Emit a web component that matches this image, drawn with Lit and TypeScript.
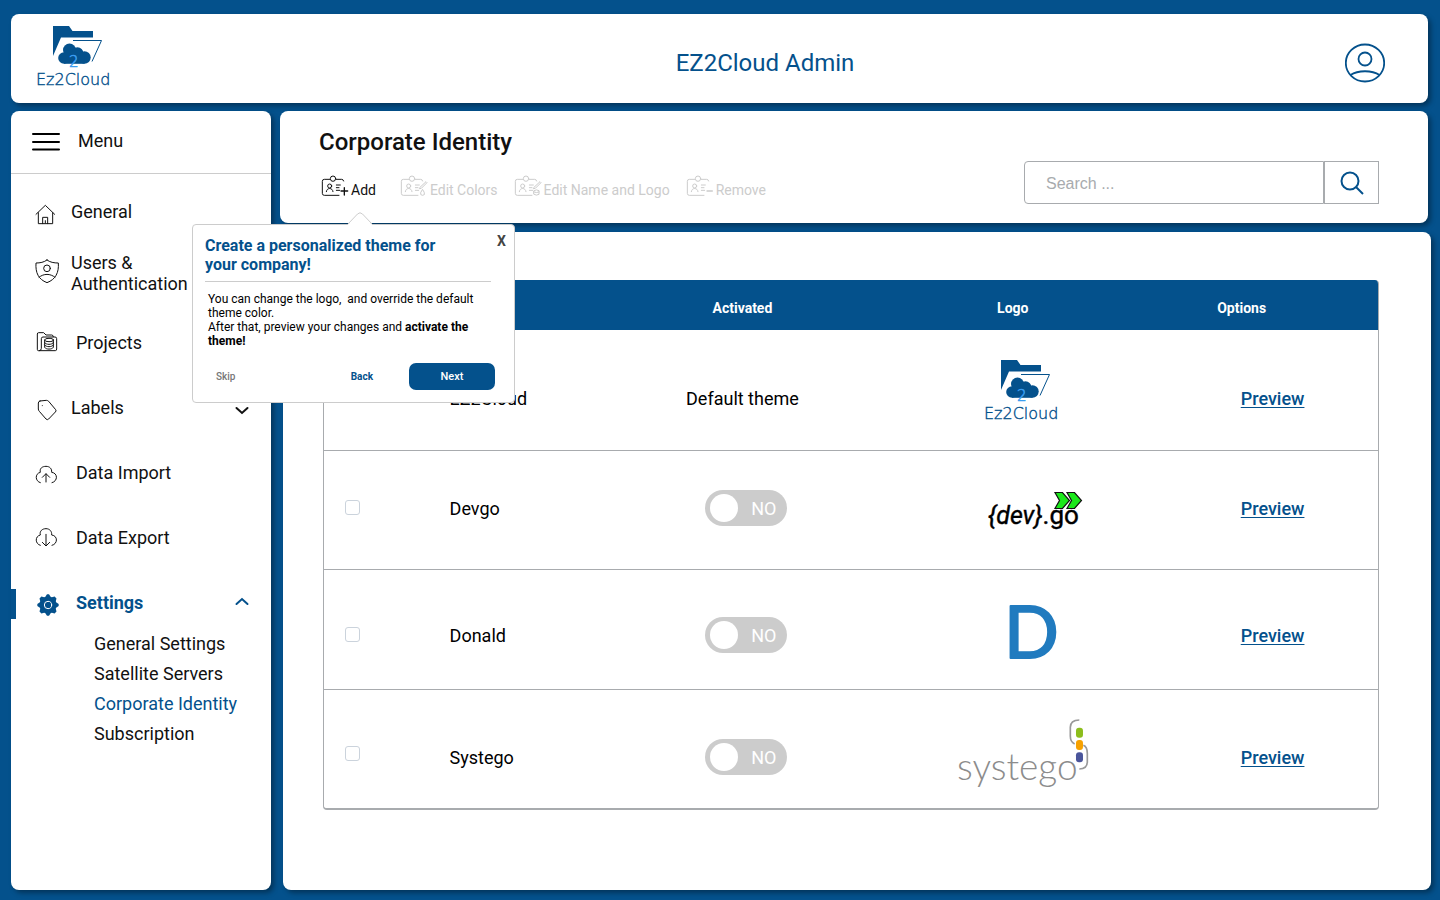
import { LitElement, html, css, svg, nothing } from "lit";
import { customElement } from "lit/decorators.js";
import { classMap } from "lit/directives/class-map.js";

interface NavItem {
  label: string;
  icon: string;
  wide?: boolean;
  arrow?: "down" | "up";
  active?: boolean;
}

interface Theme {
  name: string;
  logo: string;
  place: string;
  isDefault?: boolean;
}

const topItems: NavItem[] = [
  { label: "General", icon: "home" },
  { label: "Users & Authentication", icon: "shield" },
];

const mainItems: NavItem[] = [
  { label: "Projects", icon: "projects", wide: true },
  { label: "Labels", icon: "tag", arrow: "down" },
  { label: "Data Import", icon: "import", wide: true },
  { label: "Data Export", icon: "export", wide: true },
  { label: "Settings", icon: "gear", wide: true, arrow: "up", active: true },
];

const subItems = ["General Settings", "Satellite Servers", "Corporate Identity", "Subscription"];

const themes: Theme[] = [
  { name: "EZ2Cloud", logo: "ez", place: "low", isDefault: true },
  { name: "Devgo", logo: "devgo", place: "high" },
  { name: "Donald", logo: "donald", place: "mid" },
  { name: "Systego", logo: "systego", place: "low" },
];

/* The folder, cloud and wordmark, drawn in a 76 x 60 area. */
const ezMark = svg`
  <path fill="#04518c" d="M16 0H32L35.500 5H56V11.500H24L16 30z" />
  <path fill="none" stroke="#04518c" stroke-width="1" d="M36 14.500H64.500L55 35.500" />
  <g fill="#04518c">
    <circle cx="27" cy="32" r="5.800" />
    <circle cx="32.500" cy="24" r="6.500" />
    <circle cx="40.500" cy="27" r="5.800" />
    <circle cx="47.500" cy="31.500" r="6.200" />
    <rect x="27" y="26" width="20.500" height="11.800" />
  </g>
  <text class="word" x="32" y="41" font-size="15" fill="#3b9df0" stroke="#3b9df0" stroke-width="0.600">2</text>
  <text class="word" x="-1" y="59" font-size="16" fill="#04518c" stroke="#04518c" stroke-width="0.400">Ez2Cloud</text>`;

@customElement("app-root")
export class AppRoot extends LitElement {
  static styles = css`
    :host {
      --brand: #04518c;
      --line: #a8abae;
      display: flex;
      flex-direction: column;
      gap: 8px;
      box-sizing: border-box;
      min-height: 100vh;
      padding: 14px 12px 10px 11px;
      background: var(--brand);
      color: #111;
      font-family: Roboto, "Liberation Sans", sans-serif;
      font-size: 18px;
      line-height: 21px;
    }
    *, *::before { box-sizing: border-box; }
    button, input { font: inherit; color: inherit; }
    button { padding: 0; border: 0; background: none; cursor: pointer; }
    a { color: inherit; text-decoration: none; }
    ul { list-style: none; margin: 0; padding: 0; }
    svg { display: block; flex: none; }
    .word { font-family: "DejaVu Sans", sans-serif; font-weight: 200; }
    .card {
      background: #fff;
      border-radius: 8px;
      box-shadow: 3px 3px 5px rgba(0, 0, 0, 0.35);
    }

    .top { display: flex; align-items: center; height: 89px; padding: 0 43px 0 26px; }
    .app-title {
      flex: 1;
      margin: 0;
      padding: 8px 0 0 72px;
      text-align: center;
      color: var(--brand);
      font-size: 24px;
      line-height: 28px;
      font-weight: 400;
    }
    .brand-logo { overflow: visible; padding-bottom: 6px; box-sizing: content-box; }
    .account { padding-top: 9px; }

    .body { flex: 1; display: grid; grid-template-columns: 260px minmax(0, 1fr); gap: 9px; }
    .side { overflow: hidden; }
    .menu {
      display: flex;
      align-items: center;
      gap: 18px;
      width: 100%;
      height: 63px;
      padding: 0 21px 3px;
      border-bottom: 1px solid #ccc;
    }
    .nav-top { padding-top: 7px; }
    .nav-top .item { height: 61px; }
    .nav-main { padding-top: 7px; }
    .item { display: flex; align-items: center; gap: 12px; height: 65px; padding: 0 22px 0 24px; }
    .item.wide { gap: 17px; }
    .item span { flex: 1; }
    .item.active { position: relative; color: var(--brand); font-weight: 700; }
    .item.active::before {
      content: "";
      position: absolute;
      left: 0;
      top: 19px;
      width: 5px;
      height: 30px;
      background: var(--brand);
    }
    .icon { fill: none; stroke: currentColor; stroke-width: 3; stroke-linecap: round; stroke-linejoin: round; }
    .sub { padding-left: 83px; margin-top: -6px; line-height: 30px; }
    .sub .current { color: var(--brand); }

    .content { display: flex; flex-direction: column; gap: 9px; }
    .bar {
      position: relative;
      display: flex;
      justify-content: space-between;
      align-items: flex-end;
      height: 112px;
      padding: 0 49px 19px 39px;
    }
    h2 { margin: 0 0 17px; font-size: 24px; line-height: 28px; font-weight: 500; }
    .tools { display: flex; gap: 16px; font-size: 14px; line-height: 20px; padding: 0 0 4px 2px; }
    .tool { display: flex; align-items: flex-end; gap: 2px; height: 27px; }
    .tool:disabled { color: #ccc; cursor: default; }
    .tool:first-child { margin-right: 8px; }
    .search { display: flex; height: 43px; }
    .search input {
      width: 300px;
      padding: 2px 21px 0;
      border: 1px solid var(--line);
      border-radius: 4px 0 0 4px;
      background: #fff;
      font-family: "Liberation Sans", sans-serif;
      font-size: 16px;
      outline: none;
    }
    .search input::placeholder { color: #a8abae; opacity: 1; }
    .search button {
      display: grid;
      place-items: center;
      width: 55px;
      border: 1px solid var(--line);
    }

    .main { flex: 1; margin: 0 -3px 0 3px; padding: 48px 52px 48px 40px; }
    .frame { border: 1px solid var(--line); border-top: 0; border-bottom-width: 2px; border-radius: 4px; overflow: hidden; }
    table { width: 100%; table-layout: fixed; border-collapse: collapse; color: #000; }
    .c-pick { width: 8.500%; }
    .c-name { width: 20.200%; }
    .c-act { width: 22%; }
    .c-logo { width: 29.300%; }
    th {
      height: 50px;
      padding: 6px 0 0;
      background: var(--brand);
      color: #fff;
      font-size: 14px;
      font-weight: 700;
    }
    th.opt { padding-left: 50px; text-align: left; }
    td { height: 120px; padding: 0; text-align: center; }
    tr + tr td { border-top: 1px solid var(--line); }
    .low td { padding-top: 17px; }
    .mid td { padding-top: 12px; }
    .high td { height: 119px; padding-bottom: 3px; }
    .low:last-child td { height: 119px; }
    td.pick { padding-left: 21px; padding-top: 10px; text-align: left; }
    .high td.pick { padding-top: 0; padding-bottom: 5px; }
    td.name { padding-left: 36px; text-align: left; }
    td.act { padding-left: 8px; }
    td.act.plain { padding-left: 0; }
    tbody tr td.logo { padding: 0 0 0 20px; }
    td.logo svg { margin: auto; overflow: visible; }
    .pick input {
      appearance: none;
      display: block;
      width: 15px;
      height: 15px;
      margin: 0;
      border: 1px solid #cbd3dc;
      border-radius: 3px;
    }
    .toggle {
      display: inline-flex;
      align-items: center;
      justify-content: space-between;
      width: 82px;
      height: 36px;
      padding: 0 11px 0 5px;
      border-radius: 18px;
      background: #ccc;
      color: #fff;
      vertical-align: middle;
    }
    .toggle input {
      appearance: none;
      width: 28px;
      height: 28px;
      margin: 0;
      border-radius: 50%;
      background: #fff;
    }
    .preview { color: var(--brand); font-weight: 500; text-decoration: underline; text-decoration-thickness: 1px; text-underline-offset: 2px; }

    .tip {
      position: absolute;
      left: -88px;
      top: 113px;
      z-index: 2;
      width: 323px;
      height: 179px;
      padding: 11px 19px 12px 12px;
      border: 1px solid #ccc;
      border-radius: 4px;
      background: #fff;
    }
    .beak { position: absolute; left: 154px; top: -14px; }
    .tip h3 {
      margin: 0 4px 10px 0;
      padding: 0 40px 7px 0;
      border-bottom: 1px solid #ccc;
      color: var(--brand);
      font-size: 16px;
      line-height: 19px;
      font-weight: 700;
    }
    .tip p { margin: 0; padding-left: 3px; color: #000; font-size: 12px; line-height: 14px; }
    .close { position: absolute; right: 8px; top: 7px; color: #444; font-size: 14px; line-height: 18px; font-weight: 700; }
    .steps { display: flex; align-items: center; margin-top: 15px; padding-left: 11px; font-size: 10px; font-weight: 500; }
    .skip { color: #777; margin-right: auto; }
    .back { color: var(--brand); font-weight: 700; margin-right: 36px; }
    .next { width: 86px; height: 27px; border-radius: 7px; background: var(--brand); color: #fff; font-size: 11px; }
  `;

  private navIcon(name: string) {
    const shapes: Record<string, [string, unknown]> = {
      home: ["105 51 72 90", svg`<path d="M108 103L136 76L164 103M115 98V131H158V98M128 131V112H143V131M136 122V129" />`],
      shield: ["105 234 72 90", svg`
        <path d="M141 240C132 247 120 249 108 249C106 278 115 298 141 308C167 298 177 278 175 249C162 249 150 247 141 240z" />
        <circle cx="141" cy="265" r="10" /><path d="M117 292C131 280 151 280 165 292" />`],
      projects: ["105 444 72 90", svg`
        <path d="M118 512H115Q112 512 112 508V462Q112 458 116 458H131L138 465H155Q160 465 160 470M118 512H166Q170 512 170 507V476Q170 471 165 471H129Q124 471 124 476V505Q124 512 118 512" />
        <ellipse cx="147" cy="480" rx="13" ry="5" /><path d="M134 480V502C138 509 156 509 160 502V480M134 488C138 495 156 495 160 488M134 495C138 502 156 502 160 495" />`],
      tag: ["105 639 72 90", svg`
        <path d="M120 663L139 661Q143 661 146 664L167 689Q170 693 166 696L146 717Q142 721 138 717L118 694Q115 691 115 687V669Q115 664 120 663z" /><path d="M127 677v.1" />`],
      import: ["105 54 72 90", svg`
        <path d="M121 128C105 124 104 101 121 97C118 85 127 79 138 79C149 79 156 86 155 97C174 99 174 124 156 128" />
        <path d="M138 126V102M127 112L138 101L149 112" />`],
      export: ["105 249 72 90", svg`
        <path d="M121 316C105 312 104 289 121 285C118 273 127 266 138 266C149 266 156 274 155 285C174 287 174 312 156 316" />
        <path d="M138 283V316M127 307L138 318L149 307" />`],
      gear: ["105 444 72 90", svg`
        <g fill="currentColor" stroke="none">
          <circle cx="144" cy="495" r="25" />
          <path d="M133 475L141 463H147L155 475zM133 515L141 527H147L155 515zM124 484L112 492V498L124 506zM164 484L176 492V498L164 506z" />
          <path transform="rotate(45 144 495)" d="M133 475L140 463H148L155 475zM133 515L140 527H148L155 515zM124 484L112 491V499L124 506zM164 484L176 491V499L164 506z" />
        </g>
        <circle cx="144" cy="495" r="11" stroke="#fff" />`],
    };
    const [box, body] = shapes[name];
    return html`<svg class="icon" width="24" height="30" viewBox=${box} aria-hidden="true">${body}</svg>`;
  }

  private navItem(item: NavItem) {
    return html`<li>
      <a href="#" class=${classMap({ item: true, wide: !!item.wide, active: !!item.active })}>
        ${this.navIcon(item.icon)}<span>${item.label}</span>
        ${item.arrow
          ? html`<svg width="14" height="14" viewBox="0 0 14 14" fill="none" stroke="currentColor" stroke-width="2" stroke-linecap="round" aria-hidden="true">
              <path d=${item.arrow === "down" ? "M1.500 7L7 12L12.500 7" : "M1.500 8L7 3L12.500 8"} />
            </svg>`
          : nothing}
      </a>
    </li>`;
  }

  private badge(kind: string) {
    const extra: Record<string, unknown> = {
      add: svg`<path d="M184 244H204M194 234V256" stroke-width="4" />`,
      colors: svg`<path d="M184 233L202 216L205 219L188 236L183 237zM191 240L186 249Q184 257 192 257Q200 257 197 249z" />`,
      logo: svg`<path d="M184 233L202 216L205 219L188 236L183 237zM184 243Q191 238 199 243V254Q191 259 184 254zM184 247Q191 251 199 247" />`,
      remove: svg`<path d="M187 244H203" stroke-width="4" />`,
    };
    return html`<svg class="icon" width="28" height="27" viewBox="124 190 84 81" aria-hidden="true">
      <path d="M150 209H134Q128 209 128 215V251Q128 257 134 257H178M170 209H186Q191 209 192 214" />
      <circle cx="160" cy="207" r="8" />
      <circle cx="150" cy="229" r="6" /><path d="M140 246C141 233 159 233 160 246M170 226H182M170 234H178M170 242H180" />
      ${extra[kind]}
    </svg>`;
  }

  private themeLogo(kind: string) {
    const logos: Record<string, unknown> = {
      ez: svg`<g transform="translate(27 15)">${ezMark}</g>`,
      devgo: svg`
        <g fill="#1be81b" stroke="#111" stroke-width="1.200">
          <path d="M97 27.500H104.500L111.500 35.500L104.500 43.500H97L101.500 35.500z" />
          <path d="M109 27.500H116.500L123.500 35.500L116.500 43.500H109L113.500 35.500z" />
        </g>
        <text x="30" y="59" font-size="25" stroke="#000" stroke-width="0.400"><tspan font-style="italic">{dev}</tspan><tspan font-size="26">.go</tspan></text>`,
      donald: svg`<text x="46" y="74" font-family="Lato, sans-serif" font-size="72" fill="#217bbf" stroke="#217bbf" stroke-width="2" stroke-linejoin="round">D</text>`,
      systego: svg`
        <text x="-1" y="76" font-family="Lato, sans-serif" font-size="37" font-weight="300" fill="#8c8c8c">systego</text>
        <g transform="translate(-18 -114) scale(0.3333)" fill="none" stroke="#999" stroke-width="5">
          <path d="M418 390Q391 390 391 412V438Q391 456 404 462M430 466Q442 470 442 490V515Q442 537 418 537" />
          <g stroke="none">
            <rect x="408" y="413" width="21" height="30" rx="9" fill="#8cbd1c" />
            <rect x="408" y="450" width="21" height="30" rx="9" fill="#f7a100" />
            <rect x="408" y="487" width="21" height="30" rx="9" fill="#4a559b" />
          </g>
        </g>`,
    };
    return html`<svg width="130" height="90" viewBox="0 0 130 90">${logos[kind]}</svg>`;
  }

  private themeRow(theme: Theme) {
    return html`<tr class=${theme.place}>
      <td class="pick">${theme.isDefault ? nothing : html`<input type="checkbox" aria-label=${theme.name} />`}</td>
      <td class="name">${theme.name}</td>
      ${theme.isDefault
        ? html`<td class="act plain">Default theme</td>`
        : html`<td class="act"><label class="toggle"><input type="checkbox" role="switch" />NO</label></td>`}
      <td class="logo">${this.themeLogo(theme.logo)}</td>
      <td><a class="preview" href="#">Preview</a></td>
    </tr>`;
  }

  render() {
    return html`
      <header class="card top">
        <svg class="brand-logo" width="76" height="60" viewBox="0 0 76 60">${ezMark}</svg>
        <h1 class="app-title">EZ2Cloud Admin</h1>
        <button class="account" aria-label="Account">
          <svg width="40" height="40" viewBox="0 0 40 40" fill="none" stroke="#04518c" stroke-width="1.800">
            <ellipse cx="20" cy="20" rx="19.200" ry="18.500" />
            <circle cx="20" cy="16" r="6.500" />
            <path d="M5.500 32C13 27 27 27 34.500 32" />
          </svg>
        </button>
      </header>
      <div class="body">
        <nav class="card side">
          <button class="menu">
            <svg width="28" height="20" viewBox="0 0 28 20" stroke="#000" stroke-width="2" stroke-linecap="round" aria-hidden="true">
              <path d="M1 3H27M1 11H27M1 18.500H27" />
            </svg>
            Menu
          </button>
          <ul class="nav-top">${topItems.map((i) => this.navItem(i))}</ul>
          <ul class="nav-main">${mainItems.map((i) => this.navItem(i))}</ul>
          <ul class="sub">
            ${subItems.map((s) => html`<li><a href="#" class=${classMap({ current: s === "Corporate Identity" })}>${s}</a></li>`)}
          </ul>
        </nav>
        <div class="content">
          <section class="card bar">
            <div>
              <h2>Corporate Identity</h2>
              <div class="tools">
                <button class="tool">${this.badge("add")}Add</button>
                <button class="tool" disabled>${this.badge("colors")}Edit Colors</button>
                <button class="tool" disabled>${this.badge("logo")}Edit Name and Logo</button>
                <button class="tool" disabled>${this.badge("remove")}Remove</button>
              </div>
            </div>
            <form class="search">
              <input type="search" placeholder="Search ..." aria-label="Search" />
              <button type="button" aria-label="Search">
                <svg width="24" height="24" viewBox="0 0 24 24" fill="none" stroke="#04518c" stroke-width="2">
                  <circle cx="10" cy="10" r="8.500" /><path d="M16 16L23 23" />
                </svg>
              </button>
            </form>
            <aside class="tip" role="dialog" aria-labelledby="tip-title">
              <svg class="beak" width="26" height="15" viewBox="0 0 26 15" fill="#fff" stroke="#ccc">
                <path stroke="none" d="M0 15L1 13.500L10 3Q13 0 16 3L25 13.500L26 15z" />
                <path fill="none" d="M.5 13.500L10.500 3Q13 .5 15.500 3L25.500 13.500" />
              </svg>
              <h3 id="tip-title">Create a personalized theme for your company!</h3>
              <button class="close" aria-label="Close">X</button>
              <p>You can change the logo,&nbsp; and override the default theme color.</p>
              <p>After that, preview your changes and <b>activate the</b> <b>theme!</b></p>
              <div class="steps">
                <button class="skip">Skip</button>
                <button class="back">Back</button>
                <button class="next">Next</button>
              </div>
            </aside>
          </section>
          <main class="card main">
            <div class="frame">
              <table>
                <thead>
                  <tr>
                    <th class="c-pick"></th>
                    <th class="c-name"></th>
                    <th class="c-act">Activated</th>
                    <th class="c-logo">Logo</th>
                    <th class="opt">Options</th>
                  </tr>
                </thead>
                <tbody>
                  ${themes.map((t) => this.themeRow(t))}
                </tbody>
              </table>
            </div>
          </main>
        </div>
      </div>
    `;
  }
}
